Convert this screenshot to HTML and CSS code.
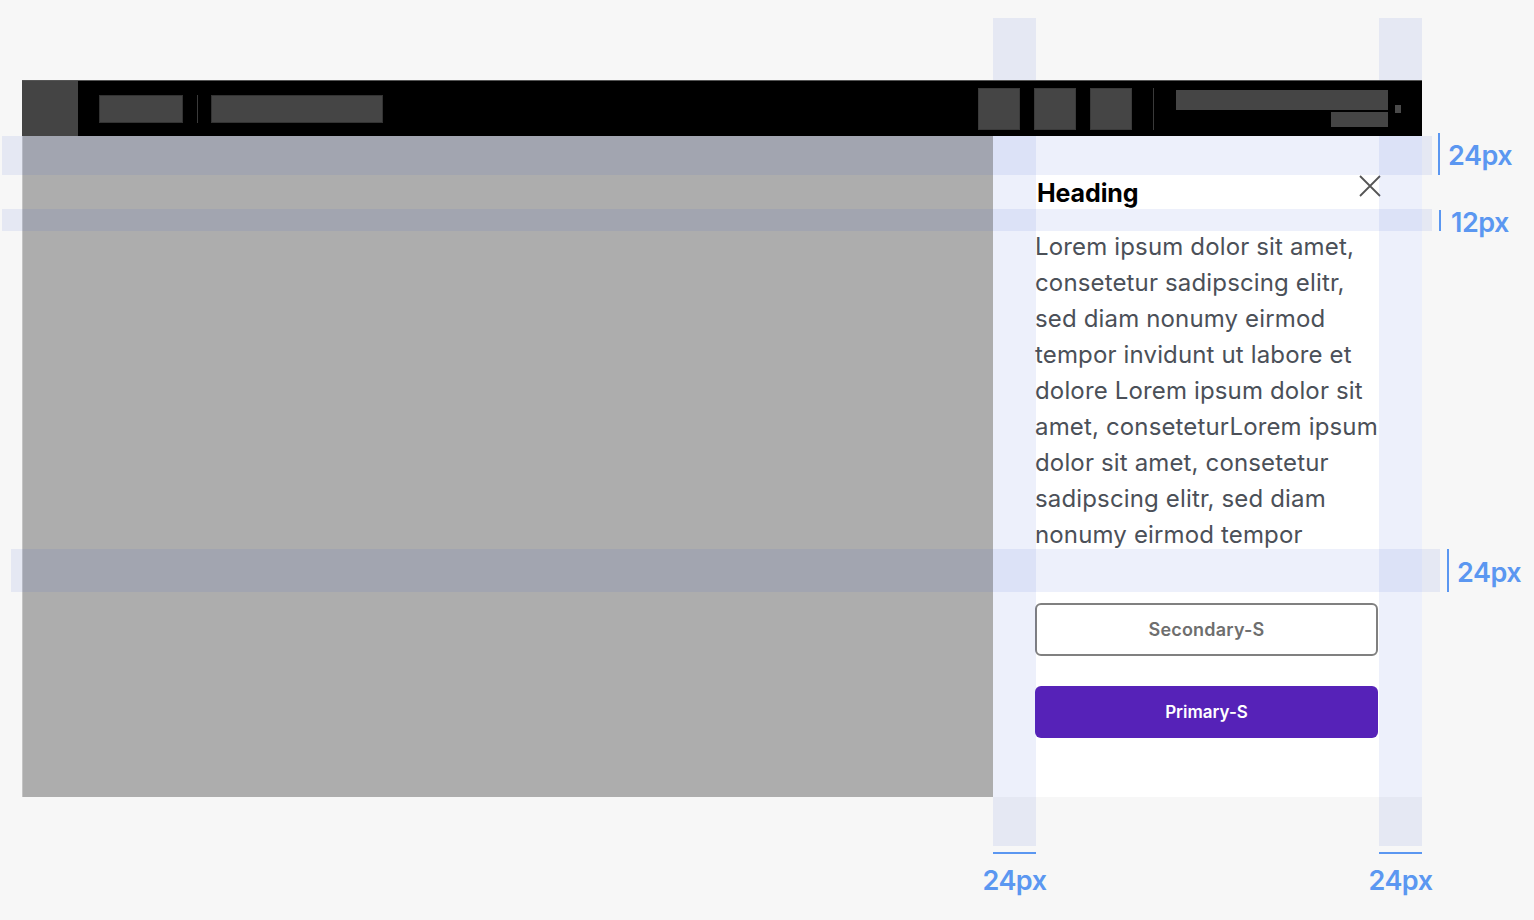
FILE: index.html
```html
<!DOCTYPE html>
<html lang="en">
<head>
<meta charset="utf-8">
<title>Drawer spacing spec</title>
<link rel="stylesheet" href="styles.css">
</head>
<body>
<div class="canvas">
  <div class="frame">
    <header class="topbar">
      <div class="logo"></div>
      <div class="ph ph-short"></div>
      <div class="vsep"></div>
      <div class="ph ph-long"></div>
      <div class="spacer"></div>
      <div class="tool"></div>
      <div class="tool"></div>
      <div class="tool"></div>
      <div class="vsep vsep-tall"></div>
      <div class="user">
        <div class="user-name"></div>
        <div class="user-role"></div>
      </div>
      <div class="caret"></div>
    </header>
    <div class="content">
      <div class="scrim"></div>
      <aside class="drawer">
        <div class="drawer-head">
          <h2 class="heading">Heading</h2>
          <svg class="close" width="22" height="22" viewBox="0 0 22 22" aria-label="Close">
            <path d="M1 1 L21 21 M21 1 L1 21" stroke="#555" stroke-width="1.8" fill="none"/>
          </svg>
        </div>
        <p class="body-text">Lorem ipsum dolor sit amet,<br>consetetur sadipscing elitr,<br>sed diam nonumy eirmod<br>tempor invidunt ut labore et<br>dolore Lorem ipsum dolor sit<br>amet, conseteturLorem ipsum<br>dolor sit amet, consetetur<br>sadipscing elitr, sed diam<br>nonumy eirmod tempor</p>
        <button class="btn btn-secondary">Secondary-S</button>
        <button class="btn btn-primary">Primary-S</button>
      </aside>
    </div>
  </div>

  <div class="guide col col-left"></div>
  <div class="guide col col-right"></div>
  <div class="guide band band-top"></div>
  <div class="guide band band-gap"></div>
  <div class="guide band band-bottom"></div>

  <div class="mark mark-v mark-top"><span class="tick"></span><span class="label">24px</span></div>
  <div class="mark mark-v mark-gap"><span class="tick"></span><span class="label">12px</span></div>
  <div class="mark mark-v mark-bottom"><span class="tick"></span><span class="label">24px</span></div>
  <div class="mark mark-h mark-left"><span class="tick"></span><span class="label">24px</span></div>
  <div class="mark mark-h mark-right"><span class="tick"></span><span class="label">24px</span></div>
</div>
</body>
</html>
```

FILE: styles.css
```css
* { box-sizing: border-box; }

html, body {
  margin: 0;
  padding: 0;
  background: #f7f7f7;
}

body {
  font-family: Inter, "Noto Sans", sans-serif;
  width: 1534px;
  height: 920px;
  overflow: hidden;
}

.canvas {
  position: relative;
  width: 1534px;
  height: 920px;
  padding: 80px 0 0 22px;
}

.frame {
  width: 1400px;
  height: 717px;
  display: flex;
  flex-direction: column;
}

/* top bar */
.topbar {
  position: relative;
  z-index: 3;
  height: 56px;
  background: #000;
  border-top: 1px solid #555;
  display: flex;
  align-items: center;
  padding-right: 21px;
}

.logo {
  width: 56px;
  height: 55px;
  align-self: flex-start;
  background: #444;
  margin-right: 21px;
}

.ph {
  height: 28px;
  background: #454545;
  border: 1px solid #333;
}

.ph-short { width: 84px; }
.ph-long { width: 172px; }

.vsep {
  width: 1px;
  height: 28px;
  background: #3a3a3a;
  margin: 0 13px 0 14px;
}

.vsep-tall {
  height: 42px;
  margin: 0 22px 0 21px;
}

.spacer { flex: 1; }

.tool {
  width: 42px;
  height: 42px;
  background: #454545;
  border: 1px solid #3a3a3a;
  margin-left: 14px;
}

.tool:first-of-type { margin-left: 0; }

.user {
  width: 212px;
  display: flex;
  flex-direction: column;
  align-items: flex-end;
  gap: 2px;
}

.user-name {
  width: 212px;
  height: 20px;
  background: #454545;
}

.user-role {
  width: 57px;
  height: 15px;
  background: #454545;
}

.caret {
  width: 6px;
  height: 8px;
  background: #4a4a4a;
  margin-left: 7px;
}

/* content */
.content {
  flex: 1;
  display: flex;
}

.scrim {
  flex: 1;
  background: #adadad;
  border-left: 1px solid #c4c4c4;
}

.drawer {
  width: 429px;
  background: #fff;
  padding: 39px 44px 0 42px;
  display: flex;
  flex-direction: column;
}

.drawer-head {
  height: 34px;
  display: flex;
  justify-content: space-between;
  align-items: flex-start;
}

.heading {
  margin: 0;
  font-weight: 700;
  font-size: 25px;
  line-height: 36px;
  color: #000;
  padding-left: 2px;
  letter-spacing: -0.1px;
}

.close {
  margin-right: -3px;
}

.body-text {
  margin: 20px 0 0;
  font-size: 24px;
  line-height: 36px;
  color: #4b5058;
  white-space: nowrap;
  letter-spacing: 0.15px;
}

.btn {
  display: block;
  width: 343px;
  border-radius: 6px;
  font-family: Inter, "Noto Sans", sans-serif;
  font-weight: 600;
  font-size: 17px;
  cursor: pointer;
}

.btn-secondary {
  margin-top: 50px;
  height: 53px;
  background: #fff;
  border: 2px solid #808080;
  color: #6e6e6e;
  font-size: 18px;
  letter-spacing: 0.2px;
}

.btn-primary {
  margin-top: 30px;
  height: 52px;
  background: #5622b8;
  border: none;
  color: #fff;
}

/* spec guides */
.guide {
  position: absolute;
  z-index: 2;
  background: rgba(50, 90, 210, 0.09);
  pointer-events: none;
}

.col {
  top: 18px;
  height: 828px;
  width: 43px;
}

.col-left { left: 993px; }
.col-right { left: 1379px; }

.band { height: 39px; }

.band-top { top: 136px; left: 2px; width: 1430px; }
.band-gap { top: 209px; height: 22px; left: 2px; width: 1430px; }
.band-bottom { top: 549px; height: 43px; left: 11px; width: 1429px; }

.mark {
  position: absolute;
  z-index: 4;
  display: flex;
  align-items: center;
  color: #5b97f1;
  font-weight: 600;
  font-size: 27px;
  letter-spacing: -0.5px;
}

.mark .label { line-height: 1; }

.mark .tick { background: #5b97f1; display: block; }

.mark-v .tick { width: 2px; }

.mark-top { left: 1438px; top: 133px; gap: 8px; height: 42px; }
.mark-top .tick { height: 42px; }
.mark-top .label { margin-top: 2px; }

.mark-gap { left: 1439px; top: 210px; gap: 10px; height: 21px; }
.mark-gap .tick { height: 21px; }
.mark-gap .label { margin-top: 3px; }

.mark-bottom { left: 1447px; top: 549px; gap: 8px; height: 43px; }
.mark-bottom .tick { height: 43px; }
.mark-bottom .label { margin-top: 3px; }

.mark-h {
  flex-direction: column;
  align-items: center;
  top: 852px;
  width: 43px;
  gap: 9px;
}

.mark-h .tick { width: 43px; height: 2px; }
.mark-h .label { margin-top: 4px; }

.mark-left { left: 993px; }
.mark-right { left: 1379px; }
```
